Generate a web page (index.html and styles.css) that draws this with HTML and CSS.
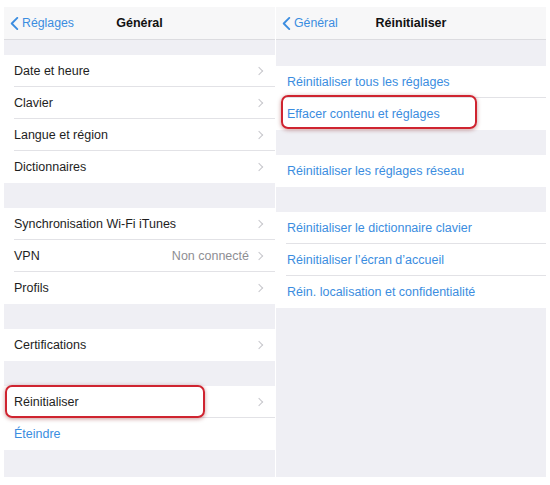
FILE: index.html
```html
<!DOCTYPE html>
<html lang="fr">
<head>
  <meta charset="UTF-8">
  <meta name="viewport" content="width=device-width, initial-scale=1.0">
  <link rel="stylesheet" href="styles.css">
</head>
<body>
  <div class="screens">

    <!-- Général -->
    <section class="panel">
      <header class="navbar">
        <a class="back">
          <svg class="back-icon" viewBox="0 0 9 14"><polyline points="7.5,1 1.5,7 7.5,13"/></svg>
          Réglages
        </a>
        <h1>Général</h1>
      </header>

      <div class="content first">
        <ul class="group">
          <li class="row">Date et heure<span class="chev"></span></li>
          <li class="row">Clavier<span class="chev"></span></li>
          <li class="row">Langue et région<span class="chev"></span></li>
          <li class="row">Dictionnaires<span class="chev"></span></li>
        </ul>
        <ul class="group">
          <li class="row">Synchronisation Wi-Fi iTunes<span class="chev"></span></li>
          <li class="row">VPN<span class="detail">Non connecté</span><span class="chev"></span></li>
          <li class="row">Profils<span class="chev"></span></li>
        </ul>
        <ul class="group">
          <li class="row">Certifications<span class="chev"></span></li>
        </ul>
        <ul class="group">
          <li class="row">Réinitialiser<span class="chev"></span><span class="highlight hl-left"></span></li>
          <li class="row link">Éteindre</li>
        </ul>
      </div>
    </section>

    <!-- Réinitialiser -->
    <section class="panel">
      <header class="navbar">
        <a class="back">
          <svg class="back-icon" viewBox="0 0 9 14"><polyline points="7.5,1 1.5,7 7.5,13"/></svg>
          Général
        </a>
        <h1>Réinitialiser</h1>
      </header>

      <div class="content">
        <ul class="group">
          <li class="row link">Réinitialiser tous les réglages</li>
          <li class="row link">Effacer contenu et réglages<span class="highlight hl-right"></span></li>
        </ul>
        <ul class="group">
          <li class="row link">Réinitialiser les réglages réseau</li>
        </ul>
        <ul class="group">
          <li class="row link">Réinitialiser le dictionnaire clavier</li>
          <li class="row link">Réinitialiser l’écran d’accueil</li>
          <li class="row link">Réin. localisation et confidentialité</li>
        </ul>
      </div>
    </section>

  </div>
</body>
</html>
```

FILE: styles.css
```css
:root {
  --ios-bg: #efeff4;
  --nav-bg: #f7f7f8;
  --cell-bg: #ffffff;
  --separator: #e2e2e6;
  --text-color: #1e1e1e;
  --link-color: #3b8de0;
  --muted: #8e8e93;
  --chevron: #c7c7cc;
  --mark-red: #cf2430;
}

body {
  margin: 0;
  background-color: #ffffff;
  font-family: 'Liberation Sans', Arial, sans-serif;
  color: var(--text-color);
}

.screens {
  display: flex;
  gap: 1px;
  padding: 7px 4px 0 4px;
  background-color: #ffffff;
}

.panel {
  width: 271px;
  height: 470px;
  background-color: var(--ios-bg);
}

.panel + .panel {
  width: 270px;
}

.navbar {
  position: relative;
  height: 32px;
  display: flex;
  align-items: center;
  justify-content: center;
  background-color: var(--nav-bg);
  border-bottom: 1px solid #dcdce0;
}

.navbar h1 {
  margin: 0;
  font-size: 12.5px;
  font-weight: bold;
  color: #111;
}

.back {
  position: absolute;
  left: 6px;
  top: 0;
  bottom: 0;
  display: flex;
  align-items: center;
  gap: 3px;
  font-size: 12.3px;
  color: var(--link-color);
}

.back-icon {
  width: 9px;
  height: 13px;
  fill: none;
  stroke: var(--link-color);
  stroke-width: 2;
  stroke-linecap: round;
  stroke-linejoin: round;
}

.content {
  padding-top: 26px;
}

.content.first {
  padding-top: 15px;
}

.group {
  list-style: none;
  margin: 0 0 25px 0;
  padding: 0 0 0 10px;
  background-color: var(--cell-bg);
}

.row {
  position: relative;
  height: 32px;
  box-sizing: border-box;
  display: flex;
  align-items: center;
  font-size: 12.5px;
  border-bottom: 1px solid var(--separator);
}

.row:last-child {
  border-bottom: none;
}

.row.link {
  color: var(--link-color);
}

.panel + .panel .row {
  padding-left: 1px;
}

.detail {
  margin-left: auto;
  color: var(--muted);
}

.chev {
  width: 5px;
  height: 5px;
  margin-left: auto;
  margin-right: 13px;
  border-top: 1.2px solid var(--chevron);
  border-right: 1.2px solid var(--chevron);
  transform: rotate(45deg);
}

.detail + .chev {
  margin-left: 7px;
}

.highlight {
  position: absolute;
  border: 2.5px solid var(--mark-red);
  border-radius: 7px;
  box-shadow: 0 1px 4px rgba(120, 0, 0, 0.4);
  box-sizing: border-box;
  pointer-events: none;
}

.hl-left {
  left: -9px;
  top: -1px;
  width: 200px;
  height: 33px;
}

.hl-right {
  left: -5px;
  top: -3px;
  width: 196px;
  height: 34px;
}
```
